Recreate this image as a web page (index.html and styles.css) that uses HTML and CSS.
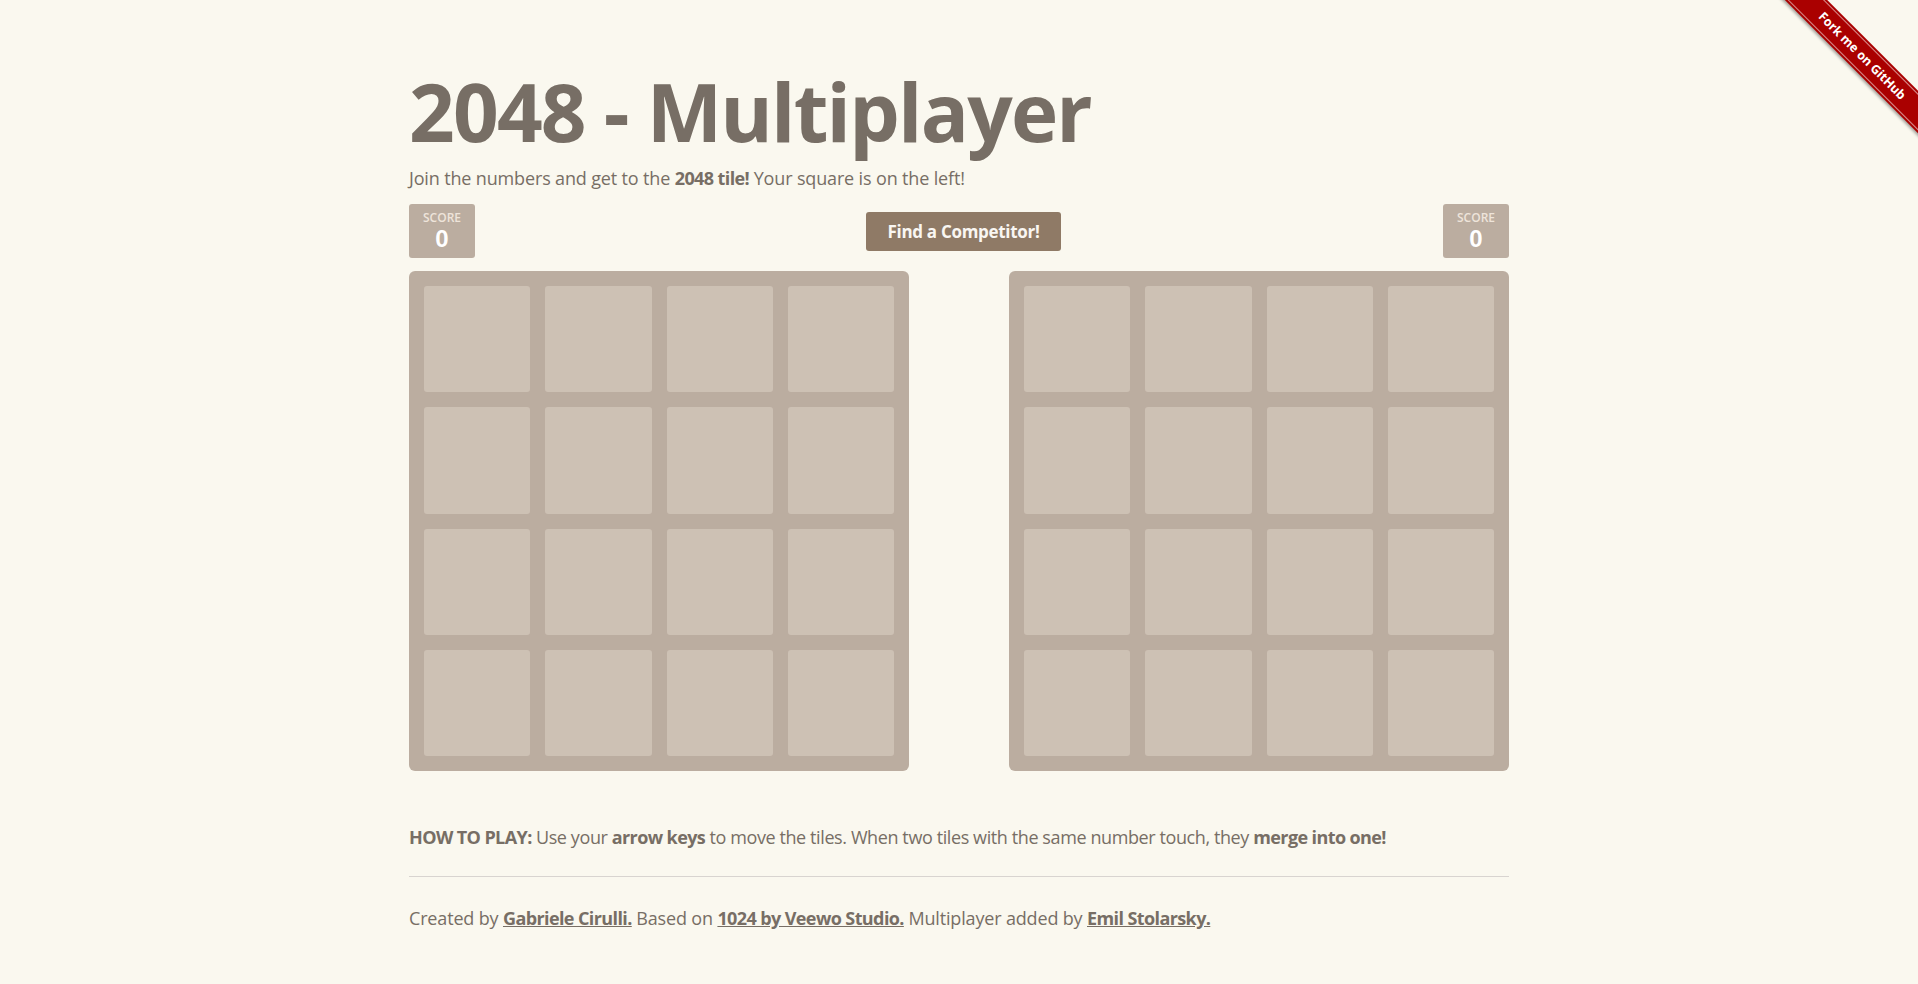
FILE: index.html
```html
<!DOCTYPE html>
<html lang="en">
<head>
<meta charset="utf-8">
<title>2048 - Multiplayer</title>
<link rel="stylesheet" href="styles.css">
</head>
<body>
<div class="container">
  <h1 class="title">2048 - Multiplayer</h1>
  <p class="intro">Join the numbers and get to the <strong>2048 tile!</strong> Your square is on the left!</p>

  <div class="controls">
    <div class="score-box">
      <div class="score-label">Score</div>
      <div class="score-value">0</div>
    </div>
    <button class="find-btn" type="button">Find a Competitor!</button>
    <div class="score-box">
      <div class="score-label">Score</div>
      <div class="score-value">0</div>
    </div>
  </div>

  <div class="boards">
    <div class="board">
      <div class="cell"></div><div class="cell"></div><div class="cell"></div><div class="cell"></div>
      <div class="cell"></div><div class="cell"></div><div class="cell"></div><div class="cell"></div>
      <div class="cell"></div><div class="cell"></div><div class="cell"></div><div class="cell"></div>
      <div class="cell"></div><div class="cell"></div><div class="cell"></div><div class="cell"></div>
    </div>
    <div class="board">
      <div class="cell"></div><div class="cell"></div><div class="cell"></div><div class="cell"></div>
      <div class="cell"></div><div class="cell"></div><div class="cell"></div><div class="cell"></div>
      <div class="cell"></div><div class="cell"></div><div class="cell"></div><div class="cell"></div>
      <div class="cell"></div><div class="cell"></div><div class="cell"></div><div class="cell"></div>
    </div>
  </div>

  <p class="howto"><strong>HOW TO PLAY:</strong> Use your <strong>arrow keys</strong> to move the tiles. When two tiles with the same number touch, they <strong>merge into one!</strong></p>
  <hr class="divider">
  <p class="credits">Created by <a href="#">Gabriele Cirulli.</a> Based on <a href="#">1024 by Veewo Studio.</a> Multiplayer added by <a href="#">Emil Stolarsky.</a></p>
</div>

<div class="ribbon-wrap">
  <a class="ribbon" href="#">Fork me on GitHub</a>
</div>
</body>
</html>
```

FILE: styles.css
```css
html, body {
  margin: 0;
  padding: 0;
  background: #faf8ef;
  color: #776e65;
  font-family: "Open Sans", "Noto Sans", sans-serif;
  font-size: 18px;
}

.container {
  width: 1100px;
  margin: 0 auto;
  padding-top: 71px;
}

.title {
  margin: 0;
  font-size: 80px;
  line-height: 80px;
  font-weight: 700;
  letter-spacing: -1.8px;
  color: #776e65;
}

.intro {
  margin: 12px 0 0;
  line-height: 30px;
  letter-spacing: -0.15px;
}

.intro strong,
.howto strong,
.credits a {
  font-weight: 700;
  letter-spacing: -0.6px;
}

.controls {
  margin-top: 11px;
  display: flex;
  justify-content: space-between;
  align-items: center;
}

.score-box {
  width: 66px;
  height: 54px;
  box-sizing: border-box;
  padding-top: 7px;
  background: #bbada0;
  border-radius: 3px;
  text-align: center;
}

.score-label {
  font-size: 12px;
  line-height: 14px;
  font-weight: 600;
  text-transform: uppercase;
  color: #eee4da;
}

.score-value {
  margin-top: 2px;
  font-family: "Liberation Sans", Arial, sans-serif;
  font-size: 24px;
  line-height: 24px;
  font-weight: 700;
  color: #ffffff;
}

.find-btn {
  margin-left: 9px;
  width: 195px;
  height: 39px;
  border: none;
  border-radius: 3px;
  background: #8f7a66;
  color: #f9f6f2;
  font-family: inherit;
  font-size: 17px;
  font-weight: 700;
  letter-spacing: -0.3px;
  padding: 0;
  cursor: pointer;
}

.boards {
  margin-top: 13px;
  display: flex;
  gap: 100px;
}

.board {
  width: 500px;
  height: 500px;
  box-sizing: border-box;
  padding: 15px;
  background: #bbada0;
  border-radius: 6px;
  display: grid;
  grid-template-columns: repeat(4, 1fr);
  grid-template-rows: repeat(4, 1fr);
  gap: 15px;
}

.cell {
  background: #cdc1b4;
  border-radius: 3px;
}

.howto {
  margin: 51px 0 0;
  line-height: 30px;
  letter-spacing: -0.4px;
}

.divider {
  margin: 24px 0 0;
  border: none;
  border-bottom: 1px solid #d8d4d0;
  height: 0;
}

.credits {
  margin: 26px 0 0;
  line-height: 30px;
  letter-spacing: -0.16px;
}

.credits a {
  color: #776e65;
  text-decoration: underline;
}

.ribbon-wrap {
  position: absolute;
  top: 0;
  right: 0;
  width: 149px;
  height: 149px;
  overflow: hidden;
}

.ribbon {
  position: absolute;
  left: -17px;
  top: 41px;
  width: 220px;
  height: 30px;
  box-sizing: border-box;
  transform: rotate(45deg);
  background: #aa0000;
  color: #ffffff;
  font-size: 12.5px;
  font-weight: 700;
  line-height: 30px;
  text-align: center;
  text-decoration: none;
  box-shadow: 0 2px 3px rgba(0, 0, 0, 0.35);
}

.ribbon::before,
.ribbon::after {
  content: "";
  position: absolute;
  left: 0;
  right: 0;
  height: 1px;
  background: rgba(255, 255, 255, 0.55);
}

.ribbon::before {
  top: 2px;
}

.ribbon::after {
  bottom: 2px;
}
```
